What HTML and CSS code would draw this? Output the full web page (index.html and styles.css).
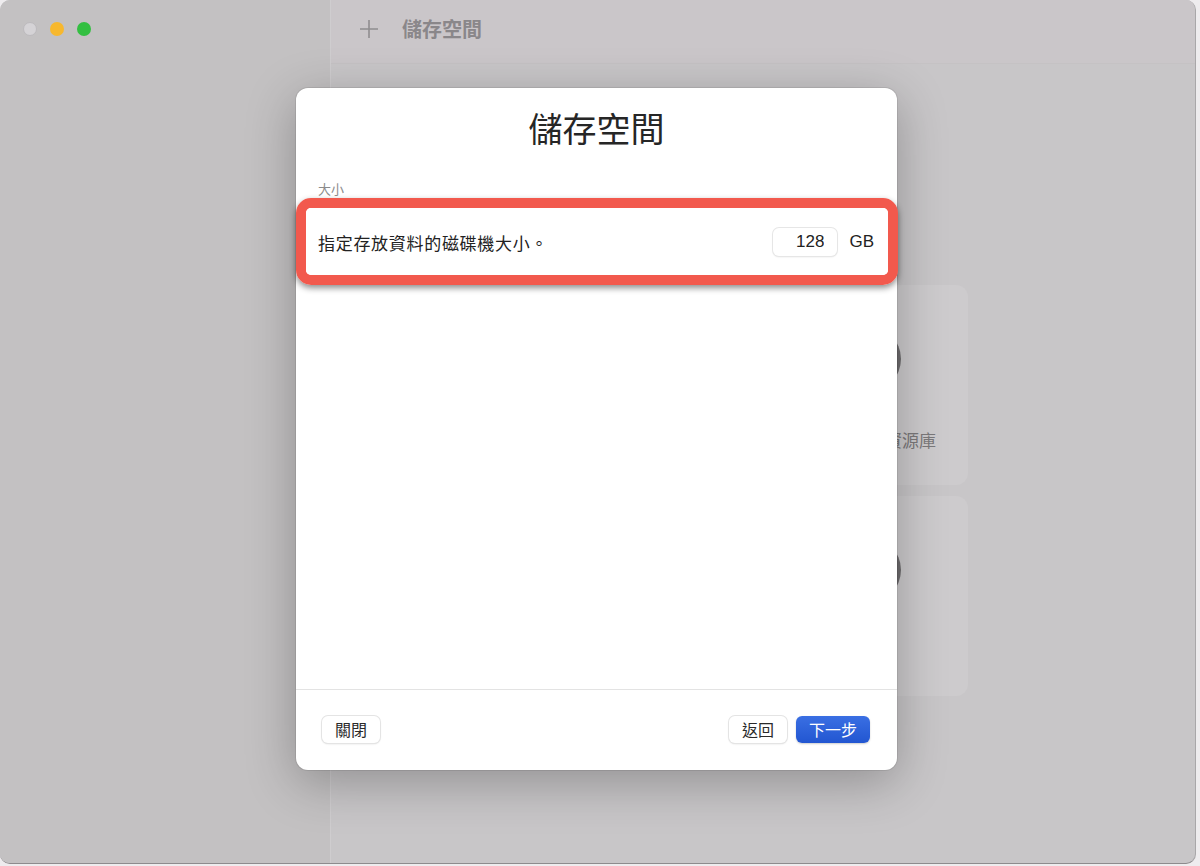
FILE: index.html
```html
<!DOCTYPE html>
<html lang="zh-Hant">
<head>
    <meta charset="UTF-8">
    <meta name="viewport" content="width=device-width, initial-scale=1.0">
    <title>儲存空間</title>
    <link rel="stylesheet" href="styles.css">
</head>
<body>

    <div class="window">
        <aside class="sidebar">
            <div class="traffic">
                <span class="light light-close"></span>
                <span class="light light-min"></span>
                <span class="light light-max"></span>
            </div>
        </aside>

        <main class="main">
            <header class="toolbar">
                <svg class="plus" width="20" height="20" viewBox="0 0 20 20">
                    <path d="M10 1v18M1 10h18" stroke="currentColor" stroke-width="1.6" fill="none"/>
                </svg>
                <h2 class="toolbar-title">儲存空間</h2>
            </header>

            <div class="content">
                <div class="grid">
                    <div class="card"><span class="card-icon"></span><span class="card-label">安裝 macOS</span></div>
                    <div class="card"><span class="card-icon"></span><span class="card-label">安裝 Linux</span></div>
                    <div class="card"><span class="card-icon"></span><span class="card-label">從雲端匯入資源庫</span></div>
                    <div class="card"><span class="card-icon"></span><span class="card-label">匯入</span></div>
                    <div class="card"><span class="card-icon"></span><span class="card-label">建立</span></div>
                    <div class="card"><span class="card-icon"></span><span class="card-label">其他</span></div>
                </div>
            </div>
        </main>

        <!-- modal sheet -->
        <div class="dialog">
            <h1 class="dialog-title">儲存空間</h1>

            <div class="dialog-body">
                <p class="section-label">大小</p>
                <div class="highlight">
                    <div class="row">
                        <span class="row-text">指定存放資料的磁碟機大小。</span>
                        <input class="size-input" type="text" value="128">
                        <span class="unit">GB</span>
                    </div>
                </div>
            </div>

            <footer class="dialog-footer">
                <button class="btn">關閉</button>
                <div class="footer-right">
                    <button class="btn">返回</button>
                    <button class="btn btn-primary">下一步</button>
                </div>
            </footer>
        </div>
    </div>

</body>
</html>
```

FILE: styles.css
```css
* {
    margin: 0;
    padding: 0;
    box-sizing: border-box;
}

body {
    width: 1200px;
    height: 866px;
    overflow: hidden;
    background-color: #eeecee;
    font-family: "Liberation Sans", "Noto Sans CJK TC", sans-serif;
}

.window {
    position: relative;
    display: flex;
    width: 1196px;
    height: 864px;
    border-radius: 10px;
    border-bottom: 1px solid #8d8b8d;
    border-right: 1px solid #a9a7a9;
    overflow: hidden;
    background-color: #c8c6c8;
}

/* sidebar */
.sidebar {
    width: 331px;
    flex-shrink: 0;
    background-color: #c3c1c2;
    border-right: 1px solid #cfcdcf;
}

.traffic {
    display: flex;
    gap: 13px;
    padding: 22px 0 0 23px;
}

.light {
    width: 14px;
    height: 14px;
    border-radius: 50%;
}

.light-close {
    background-color: #d5d3d6;
    border: 1px solid #bcbabd;
}

.light-min {
    background-color: #f7b82e;
}

.light-max {
    background-color: #33bf41;
}

/* main */
.main {
    flex: 1;
    display: flex;
    flex-direction: column;
}

.toolbar {
    height: 64px;
    display: flex;
    align-items: center;
    gap: 23px;
    padding: 0 0 6px 28px;
    background-color: #cac6c9;
    border-bottom: 1px solid #c5c2c4;
}

.plus {
    color: #8f8d8f;
}

.toolbar-title {
    font-size: 20px;
    font-weight: 700;
    color: #8a878a;
}

.content {
    flex: 1;
    padding: 221px 0 0 15px;
}

.grid {
    display: grid;
    grid-template-columns: repeat(3, 200px);
    grid-auto-rows: 200px;
    gap: 11px;
}

.card {
    display: flex;
    flex-direction: column;
    align-items: center;
    padding-top: 41px;
    border-radius: 12px;
    background-color: #cdcbcd;
}

.card-icon {
    width: 66px;
    height: 66px;
    border-radius: 50%;
    background-color: #6f6d6f;
}

.card-label {
    margin-top: 35px;
    font-size: 17px;
    color: #7b797b;
}

/* dialog */
.dialog {
    position: absolute;
    left: 296px;
    top: 88px;
    width: 601px;
    height: 682px;
    display: flex;
    flex-direction: column;
    background-color: #fff;
    border-radius: 12px;
    box-shadow: 0 12px 50px rgba(0, 0, 0, 0.28), 0 0 0 1px rgba(0, 0, 0, 0.08);
}

.dialog-title {
    padding-top: 20px;
    text-align: center;
    font-size: 34px;
    font-weight: 400;
    line-height: 44px;
    color: #262626;
}

.dialog-body {
    flex: 1;
    padding-top: 29px;
}

.section-label {
    padding-left: 22px;
    font-size: 13px;
    line-height: 18px;
    color: #8b8b8b;
}

.highlight {
    margin: -1px -1px 0 0;
    border: 10px solid #f2594d;
    border-radius: 15px;
    box-shadow: 0 3px 6px rgba(0, 0, 0, 0.45);
}

.row {
    height: 67px;
    display: flex;
    align-items: center;
    padding: 1px 14px 0 12px;
    background-color: #fff;
    border-radius: 5px;
}

.row-text {
    flex: 1;
    font-size: 17px;
    letter-spacing: 0.7px;
    color: #222;
}

.size-input {
    width: 64px;
    height: 28px;
    padding-right: 13px;
    text-align: right;
    font-family: inherit;
    font-size: 17px;
    color: #222;
    border: none;
    border-radius: 6px;
    background-color: #fff;
    box-shadow: 0 0 0 1px #e6e6e6, 0 1px 2px rgba(0, 0, 0, 0.12);
    outline: none;
}

.unit {
    margin-left: 12px;
    font-size: 17px;
    color: #222;
}

.dialog-footer {
    height: 81px;
    display: flex;
    align-items: center;
    justify-content: space-between;
    padding: 0 27px 2px 26px;
    border-top: 1px solid #e3e3e3;
}

.footer-right {
    display: flex;
    gap: 9px;
}

.btn {
    height: 27px;
    padding: 0 13px;
    font-family: inherit;
    font-size: 16px;
    color: #2a2a2a;
    background-color: #fff;
    border: none;
    border-radius: 6px;
    box-shadow: 0 0 0 1px #e4e4e4, 0 1px 2px rgba(0, 0, 0, 0.15);
}

.btn-primary {
    padding: 0 13px;
    color: #fff;
    background: linear-gradient(#3a6fe3, #2256d1);
    box-shadow: 0 1px 2px rgba(0, 0, 0, 0.2);
}
```
